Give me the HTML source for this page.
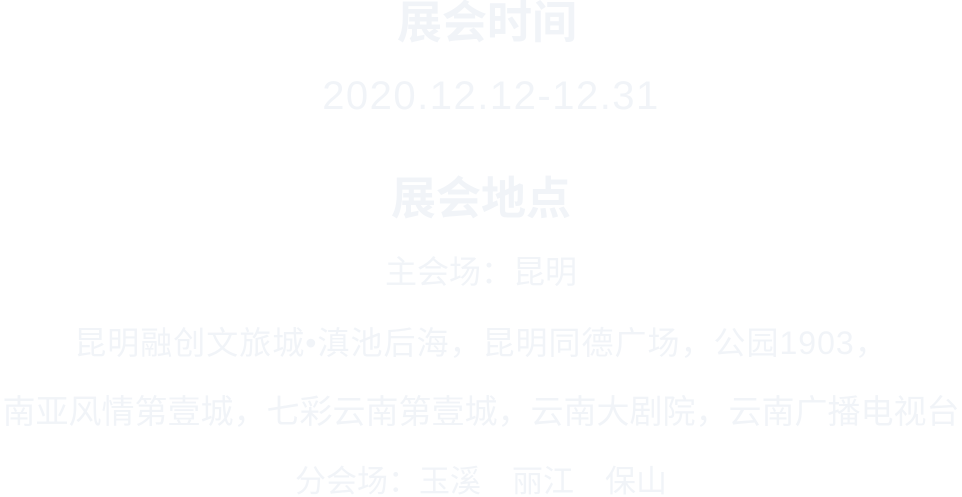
<!DOCTYPE html>
<html><head><meta charset="utf-8"><style>
html,body{margin:0;padding:0;background:#fff;width:962px;height:497px;overflow:hidden}
body{font-family:"Liberation Sans","Noto Sans CJK SC",sans-serif;color:#f1f4f8;position:relative}
.l{position:absolute;left:0;width:962px;text-align:center;white-space:nowrap;line-height:1}
.t{font-size:45px;font-weight:bold}
.s{font-size:32px}
</style></head><body>
<div class="l t" style="top:0px;left:6px">展会时间</div>
<div class="l" style="top:76px;left:10px;font-size:40px;letter-spacing:1.5px">2020.12.12-12.31</div>
<div class="l t" style="top:176px">展会地点</div>
<div class="l s" style="top:256px">主会场：昆明</div>
<div class="l s" style="top:327px;letter-spacing:1px">昆明融创文旅城•滇池后海，昆明同德广场，公园1903，</div>
<div class="l s" style="top:395px;font-size:33px">南亚风情第壹城，七彩云南第壹城，云南大剧院，云南广播电视台</div>
<div class="l s" style="top:466px;font-size:31px">分会场：玉溪　丽江　保山</div>
</body></html>
